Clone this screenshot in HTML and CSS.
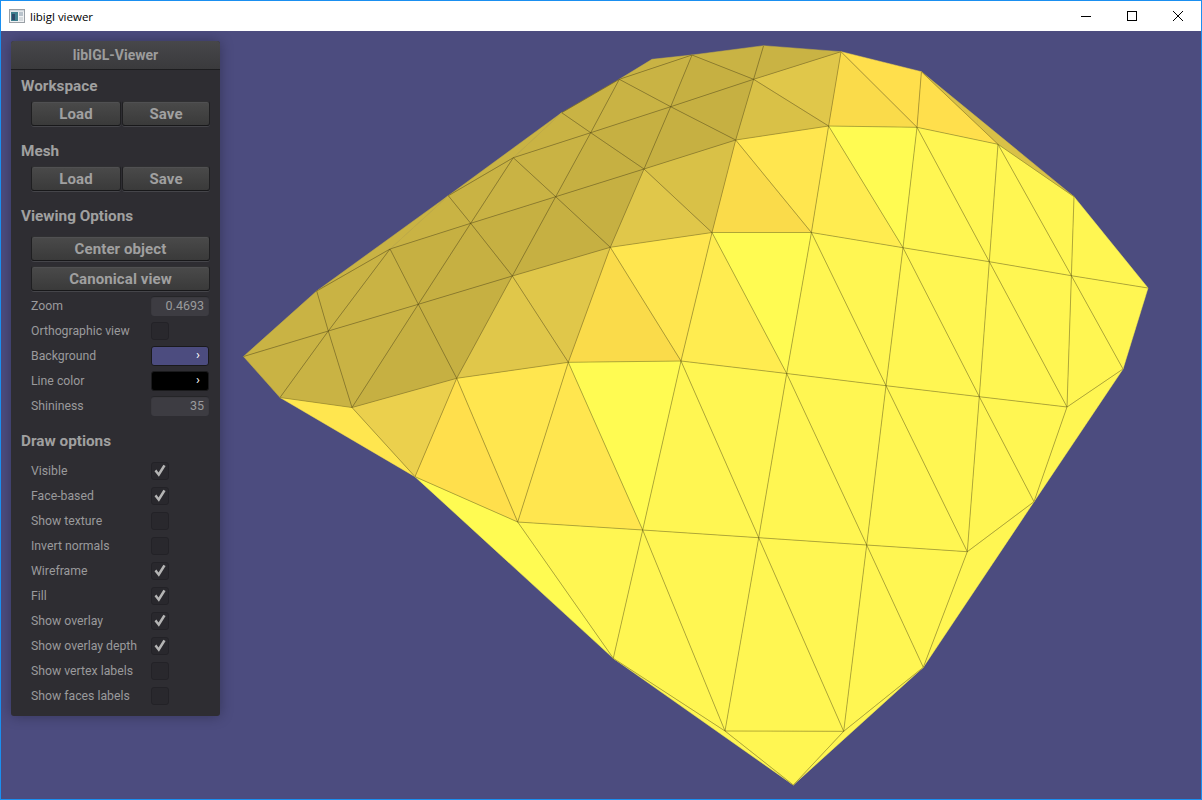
FILE: index.html
```html
<!DOCTYPE html>
<html lang="en">
<head>
<meta charset="utf-8">
<title>libigl viewer</title>
<link rel="stylesheet" href="styles.css">
</head>
<body>
<div class="window">
  <header class="titlebar">
    <svg class="appicon" width="16" height="14" viewBox="0 0 16 14">
      <rect x="0.5" y="0.5" width="15" height="13" fill="#f0f2f4" stroke="#9aa0a6"/>
      <rect x="2" y="3" width="7" height="9" fill="#3f7f8f"/>
      <rect x="3" y="5" width="3" height="6" fill="#2d4a6a"/>
      <rect x="10" y="3" width="4" height="4" fill="#b9c3cc"/>
      <rect x="10" y="8" width="4" height="4" fill="#d5dade"/>
      <rect x="1" y="1" width="14" height="1.4" fill="#cfd6dc"/>
    </svg>
    <span class="wintitle">libigl viewer</span>
    <div class="controls">
      <span class="ctl"><svg width="12" height="12" viewBox="0 0 12 12"><path class="glyph" d="M1 6.5H11"/></svg></span>
      <span class="ctl"><svg width="12" height="12" viewBox="0 0 12 12"><rect class="glyph" x="1.5" y="1.5" width="9" height="9"/></svg></span>
      <span class="ctl"><svg width="12" height="12" viewBox="0 0 12 12"><path class="glyph" d="M1 1L11 11M11 1L1 11"/></svg></span>
    </div>
  </header>
  <main class="viewport">
    <svg class="mesh" width="1200" height="768" viewBox="1 31 1200 768">
      <g class="s1">
        <polygon points="352,407.5 456.7,378.3 418.3,304.3"/>
        <polygon points="456.7,378.3 512.3,276 418.3,304.3"/>
        <polygon points="390,249 418.3,304.3 470.7,223.3"/>
        <polygon points="418.3,304.3 512.3,276 470.7,223.3"/>
        <polygon points="470.7,223.3 512.3,276 555.7,196.7"/>
        <polygon points="512.3,276 610.3,247.3 555.7,196.7"/>
        <polygon points="555.7,196.7 610.3,247.3 644,169"/>
        <polygon points="555.7,196.7 644,169 590.7,132.7"/>
        <polygon points="590.7,132.7 644,169 670.7,106.7"/>
        <polygon points="644,169 735.7,140 670.7,106.7"/>
        <polygon points="670.7,106.7 735.7,140 753.6,79.3"/>
        <polygon points="670.7,106.7 753.6,79.3 692,55"/>
      </g>
      <g class="s2">
        <polygon points="243.5,356.5 280,397.5 328.3,331"/>
        <polygon points="280,397.5 352,407.5 328.3,331"/>
        <polygon points="352,407.5 418.3,304.3 328.3,331"/>
        <polygon points="243.5,356.5 328.3,331 316.7,291"/>
        <polygon points="316.7,291 328.3,331 390,249"/>
        <polygon points="328.3,331 418.3,304.3 390,249"/>
        <polygon points="316.7,291 390,249 448.3,195.7"/>
        <polygon points="390,249 470.7,223.3 448.3,195.7"/>
        <polygon points="448.3,195.7 470.7,223.3 513.3,157.7"/>
        <polygon points="470.7,223.3 555.7,196.7 513.3,157.7"/>
        <polygon points="513.3,157.7 555.7,196.7 590.7,132.7"/>
        <polygon points="448.3,195.7 513.3,157.7 561.7,112.7"/>
        <polygon points="513.3,157.7 590.7,132.7 561.7,112.7"/>
        <polygon points="561.7,112.7 590.7,132.7 619.3,79.3"/>
        <polygon points="590.7,132.7 670.7,106.7 619.3,79.3"/>
        <polygon points="619.3,79.3 670.7,106.7 692,55"/>
        <polygon points="692,55 753.6,79.3 763.6,45.7"/>
        <polygon points="753.6,79.3 841,51.7 763.6,45.7"/>
        <polygon points="619.3,79.3 692,55 652,59.3"/>
      </g>
      <g class="s3">
        <polygon points="644,169 712,232.5 735.7,140"/>
        <polygon points="735.7,140 828.6,126 753.6,79.3"/>
        <polygon points="921.4,71.7 998,144.3 1074,196.7"/>
      </g>
      <g class="s4">
        <polygon points="456.7,378.3 568.3,362.3 512.3,276"/>
        <polygon points="568.3,362.3 610.3,247.3 512.3,276"/>
        <polygon points="610.3,247.3 712,232.5 644,169"/>
        <polygon points="753.6,79.3 828.6,126 841,51.7"/>
      </g>
      <g class="s5">
        <polygon points="352,407.5 456.7,378.3 415,476.7"/>
      </g>
      <g class="s6">
        <polygon points="568.3,362.3 681,361 610.3,247.3"/>
        <polygon points="712,232.5 811.4,232.5 735.7,140"/>
        <polygon points="828.6,126 917,127.3 841,51.7"/>
      </g>
      <g class="s7">
        <polygon points="456.7,378.3 517.7,522 415,476.7"/>
        <polygon points="841,51.7 917,127.3 921.4,71.7"/>
        <polygon points="917,127.3 998,144.3 921.4,71.7"/>
      </g>
      <g class="s8">
        <polygon points="280,397.5 352,407.5 415,476.7"/>
        <polygon points="456.7,378.3 568.3,362.3 517.7,522"/>
        <polygon points="568.3,362.3 642.7,530 517.7,522"/>
        <polygon points="681,361 712,232.5 610.3,247.3"/>
        <polygon points="735.7,140 811.4,232.5 828.6,126"/>
      </g>
      <g class="s9">
        <polygon points="681,361 786.7,373.5 712,232.5"/>
        <polygon points="811.4,232.5 903,247.7 828.6,126"/>
      </g>
      <g class="s10">
        <polygon points="681,361 758.7,537.7 642.7,530"/>
        <polygon points="681,361 786.7,373.5 758.7,537.7"/>
        <polygon points="786.7,373.5 866.7,545 758.7,537.7"/>
        <polygon points="786.7,373.5 886,385.7 866.7,545"/>
        <polygon points="886,385.7 967.3,551.7 866.7,545"/>
        <polygon points="886,385.7 979.3,396.7 967.3,551.7"/>
        <polygon points="979.3,396.7 1034,501.7 967.3,551.7"/>
        <polygon points="979.3,396.7 1067,407 1034,501.7"/>
        <polygon points="1067,407 1123,369 1034,501.7"/>
        <polygon points="517.7,522 642.7,530 613.3,658.3"/>
        <polygon points="642.7,530 725,731 613.3,658.3"/>
        <polygon points="642.7,530 758.7,537.7 725,731"/>
        <polygon points="758.7,537.7 843.7,731.3 725,731"/>
        <polygon points="758.7,537.7 866.7,545 843.7,731.3"/>
        <polygon points="866.7,545 923.3,667.3 843.7,731.3"/>
        <polygon points="866.7,545 967.3,551.7 923.3,667.3"/>
        <polygon points="967.3,551.7 1034,501.7 923.3,667.3"/>
        <polygon points="725,731 843.7,731.3 793.3,785"/>
        <polygon points="613.3,658.3 725,731 793.3,785"/>
        <polygon points="843.7,731.3 923.3,667.3 793.3,785"/>
        <polygon points="786.7,373.5 886,385.7 811.4,232.5"/>
        <polygon points="886,385.7 903,247.7 811.4,232.5"/>
        <polygon points="886,385.7 979.3,396.7 903,247.7"/>
        <polygon points="979.3,396.7 989.3,261.7 903,247.7"/>
        <polygon points="979.3,396.7 1067,407 989.3,261.7"/>
        <polygon points="1067,407 1071.4,275.7 989.3,261.7"/>
        <polygon points="1067,407 1123,369 1071.4,275.7"/>
        <polygon points="1123,369 1148,288 1071.4,275.7"/>
        <polygon points="903,247.7 989.3,261.7 917,127.3"/>
        <polygon points="917,127.3 989.3,261.7 998,144.3"/>
        <polygon points="989.3,261.7 1071.4,275.7 998,144.3"/>
        <polygon points="998,144.3 1071.4,275.7 1074,196.7"/>
        <polygon points="1071.4,275.7 1148,288 1074,196.7"/>
      </g>
      <g class="s11">
        <polygon points="415,476.7 517.7,522 613.3,658.3"/>
        <polygon points="568.3,362.3 681,361 642.7,530"/>
        <polygon points="786.7,373.5 811.4,232.5 712,232.5"/>
        <polygon points="828.6,126 903,247.7 917,127.3"/>
      </g>
      <path class="wire" d="M243.5 356.5L328.3 331L418.3 304.3L512.3 276L610.3 247.3L712 232.5L811.4 232.5L903 247.7L989.3 261.7L1071.4 275.7L1148 288
      M280 397.5L352 407.5L456.7 378.3L568.3 362.3L681 361L786.7 373.5L886 385.7L979.3 396.7L1067 407L1123 369
      M316.7 291L390 249L470.7 223.3L555.7 196.7L644 169L735.7 140L828.6 126L917 127.3L998 144.3L1074 196.7
      M448.3 195.7L513.3 157.7L590.7 132.7L670.7 106.7L753.6 79.3L841 51.7
      M561.7 112.7L619.3 79.3L692 55
      M415 476.7L517.7 522L642.7 530L758.7 537.7L866.7 545L967.3 551.7L1034 501.7
      M613.3 658.3L725 731L843.7 731.3L923.3 667.3
      M316.7 291L328.3 331L352 407.5
      M280 397.5L328.3 331L390 249L418.3 304.3L456.7 378.3
      M352 407.5L418.3 304.3L470.7 223.3L513.3 157.7
      M448.3 195.7L470.7 223.3L512.3 276L568.3 362.3
      M456.7 378.3L512.3 276L555.7 196.7L590.7 132.7L619.3 79.3
      M513.3 157.7L555.7 196.7L610.3 247.3L681 361
      M568.3 362.3L610.3 247.3L644 169L670.7 106.7L692 55
      M561.7 112.7L590.7 132.7L644 169L712 232.5L786.7 373.5
      M619.3 79.3L670.7 106.7L735.7 140L811.4 232.5L886 385.7
      M692 55L753.6 79.3L828.6 126L903 247.7L979.3 396.7
      M681 361L712 232.5L735.7 140L753.6 79.3L763.6 45.7
      M786.7 373.5L811.4 232.5L828.6 126L841 51.7
      M886 385.7L903 247.7L917 127.3L921.4 71.7
      M979.3 396.7L989.3 261.7L998 144.3
      M1067 407L1071.4 275.7L1074 196.7
      M841 51.7L917 127.3L989.3 261.7L1067 407
      M921.4 71.7L998 144.3L1071.4 275.7L1123 369
      M352 407.5L415 476.7L456.7 378.3L517.7 522L568.3 362.3L642.7 530L681 361L758.7 537.7L786.7 373.5L866.7 545L886 385.7L967.3 551.7L979.3 396.7L1034 501.7L1067 407
      M517.7 522L613.3 658.3L642.7 530L725 731L758.7 537.7L843.7 731.3L866.7 545L923.3 667.3L967.3 551.7
      M725 731L793.3 785L843.7 731.3"/>
    </svg>
    <aside class="panel">
      <h1 class="paneltitle">libIGL-Viewer</h1>
      <h2 class="heading">Workspace</h2>
      <div class="btnrow"><button class="btn">Load</button><button class="btn">Save</button></div>
      <h2 class="heading next">Mesh</h2>
      <div class="btnrow"><button class="btn">Load</button><button class="btn">Save</button></div>
      <h2 class="heading next">Viewing Options</h2>
      <div class="stack">
        <button class="btn">Center object</button>
        <button class="btn">Canonical view</button>
      </div>
      <div class="rows">
        <div class="row"><span class="label">Zoom</span><span class="field">0.4693</span></div>
        <div class="row"><span class="label">Orthographic view</span><span class="check"></span></div>
        <div class="row"><span class="label">Background</span><span class="swatch bgcolor">›</span></div>
        <div class="row"><span class="label">Line color</span><span class="swatch linecolor">›</span></div>
        <div class="row"><span class="label">Shininess</span><span class="field">35</span></div>
      </div>
      <h2 class="heading draw">Draw options</h2>
      <div class="rows">
        <div class="row"><span class="label">Visible</span><span class="check"><svg class="tick" width="18" height="18" viewBox="0 0 18 18"><path d="M3.5 9.2L5.4 7.5L7.5 10.4L12.4 2.8L14.6 4L7.9 14.8Z"/></svg></span></div>
        <div class="row"><span class="label">Face-based</span><span class="check"><svg class="tick" width="18" height="18" viewBox="0 0 18 18"><path d="M3.5 9.2L5.4 7.5L7.5 10.4L12.4 2.8L14.6 4L7.9 14.8Z"/></svg></span></div>
        <div class="row"><span class="label">Show texture</span><span class="check"></span></div>
        <div class="row"><span class="label">Invert normals</span><span class="check"></span></div>
        <div class="row"><span class="label">Wireframe</span><span class="check"><svg class="tick" width="18" height="18" viewBox="0 0 18 18"><path d="M3.5 9.2L5.4 7.5L7.5 10.4L12.4 2.8L14.6 4L7.9 14.8Z"/></svg></span></div>
        <div class="row"><span class="label">Fill</span><span class="check"><svg class="tick" width="18" height="18" viewBox="0 0 18 18"><path d="M3.5 9.2L5.4 7.5L7.5 10.4L12.4 2.8L14.6 4L7.9 14.8Z"/></svg></span></div>
        <div class="row"><span class="label">Show overlay</span><span class="check"><svg class="tick" width="18" height="18" viewBox="0 0 18 18"><path d="M3.5 9.2L5.4 7.5L7.5 10.4L12.4 2.8L14.6 4L7.9 14.8Z"/></svg></span></div>
        <div class="row"><span class="label">Show overlay depth</span><span class="check"><svg class="tick" width="18" height="18" viewBox="0 0 18 18"><path d="M3.5 9.2L5.4 7.5L7.5 10.4L12.4 2.8L14.6 4L7.9 14.8Z"/></svg></span></div>
        <div class="row"><span class="label">Show vertex labels</span><span class="check"></span></div>
        <div class="row"><span class="label">Show faces labels</span><span class="check"></span></div>
      </div>
    </aside>
  </main>
</div>
</body>
</html>
```
FILE: styles.css
```css
* { box-sizing: border-box; }
html, body { margin: 0; padding: 0; }
body { font-family: Roboto, "Liberation Sans", sans-serif; overflow: hidden; background: #4c4c7f; }

.window {
  width: 1202px;
  height: 800px;
  border: 1px solid #1a8ff0;
  display: flex;
  flex-direction: column;
}

.titlebar {
  height: 30px;
  flex: none;
  background: #fff;
  display: flex;
  align-items: center;
  padding-left: 8px;
}
.appicon { flex: none; margin-right: 5px; }
.wintitle {
  font-family: "Open Sans", "Liberation Sans", sans-serif;
  font-size: 11.5px;
  color: #000;
}
.controls { margin-left: auto; display: flex; }
.ctl {
  width: 46px;
  height: 30px;
  display: flex;
  align-items: center;
  justify-content: center;
}
.ctl svg { display: block; }
.glyph { fill: none; stroke: #000; stroke-width: 1; }

.viewport {
  flex: 1;
  position: relative;
  background: #4c4c7f;
  overflow: hidden;
}
.mesh { position: absolute; left: 0; top: 0; display: block; }
.mesh polygon { stroke-width: 0.5; }
.s1 { fill: #c6b042; stroke: #c6b042; }
.s2 { fill: #c9b344; stroke: #c9b344; }
.s3 { fill: #d9c147; stroke: #d9c147; }
.s4 { fill: #e0c74a; stroke: #e0c74a; }
.s5 { fill: #ebd04d; stroke: #ebd04d; }
.s6 { fill: #fadb4a; stroke: #fadb4a; }
.s7 { fill: #ffdf4c; stroke: #ffdf4c; }
.s8 { fill: #ffe64f; stroke: #ffe64f; }
.s9 { fill: #ffec50; stroke: #ffec50; }
.s10 { fill: #fff652; stroke: #fff652; }
.s11 { fill: #fffb52; stroke: #fffb52; }
.wire { fill: none; stroke: rgba(50, 40, 0, 0.5); stroke-width: 0.7; }

.panel {
  position: absolute;
  left: 10px;
  top: 10px;
  width: 209px;
  height: 675px;
  background: #2e2d32;
  border-radius: 3px;
  box-shadow: 0 0 14px rgba(0, 0, 0, 0.3);
}
.paneltitle {
  margin: 0;
  height: 29px;
  background: linear-gradient(#47474a, #3a3a3c);
  border-bottom: 1px solid #1d1d1f;
  border-radius: 3px 3px 0 0;
  font-size: 14px;
  font-weight: 700;
  line-height: 28px;
  text-align: center;
  color: #9c9c9c;
}
.heading {
  margin: 0;
  height: 31px;
  padding-left: 10px;
  font-size: 15.3px;
  font-weight: 700;
  line-height: 33px;
  color: #a0a0a0;
}
.heading.next { margin-top: 9px; }
.heading.draw { margin-top: 7px; line-height: 32px; }

.btnrow {
  display: grid;
  grid-template-columns: 90px 88px;
  gap: 1px;
  margin-left: 20px;
  width: 179px;
  height: 25px;
}
.btn {
  display: block;
  height: 25px;
  padding: 0;
  border: 1px solid #1f1f21;
  border-top-color: #303032;
  border-bottom-color: #18181a;
  border-radius: 3px;
  background: linear-gradient(#4a4a4a, #3a3a3a);
  box-shadow: inset 0 1px 0 #505052, 0 1px 0 #45454a;
  font-family: inherit;
  font-size: 15px;
  font-weight: 700;
  letter-spacing: 0.1px;
  color: #a0a0a0;
}
.stack {
  display: flex;
  flex-direction: column;
  gap: 5px;
  margin: 5px 0 0 20px;
  width: 179px;
}
.rows { display: flex; flex-direction: column; margin-top: 2px; }
.row {
  display: flex;
  align-items: center;
  height: 25px;
  padding-left: 20px;
}
.label {
  width: 120px;
  flex: none;
  font-size: 12.25px;
  color: #9a9a9c;
}
.field {
  width: 58px;
  height: 20px;
  padding-right: 5px;
  border-radius: 3px;
  background: #3d3c42;
  box-shadow: inset 0 1px 1px #232326;
  font-size: 12.5px;
  line-height: 20px;
  text-align: right;
  color: #9a9a9c;
}
.check {
  width: 18px;
  height: 18px;
  border-radius: 3px;
  background: #29282d;
  border: 1px solid #232227;
  position: relative;
}
.tick { display: block; position: absolute; left: -1px; top: -1px; }
.tick path { fill: #b4b4b4; }
.swatch {
  width: 58px;
  height: 20px;
  padding-right: 8px;
  border-radius: 3px;
  border: 1px solid #1a1a1c;
  font-size: 13px;
  line-height: 15px;
  text-align: right;
  color: #fff;
}
.bgcolor { background: #4c4c7f; }
.linecolor { background: #000; }
```
